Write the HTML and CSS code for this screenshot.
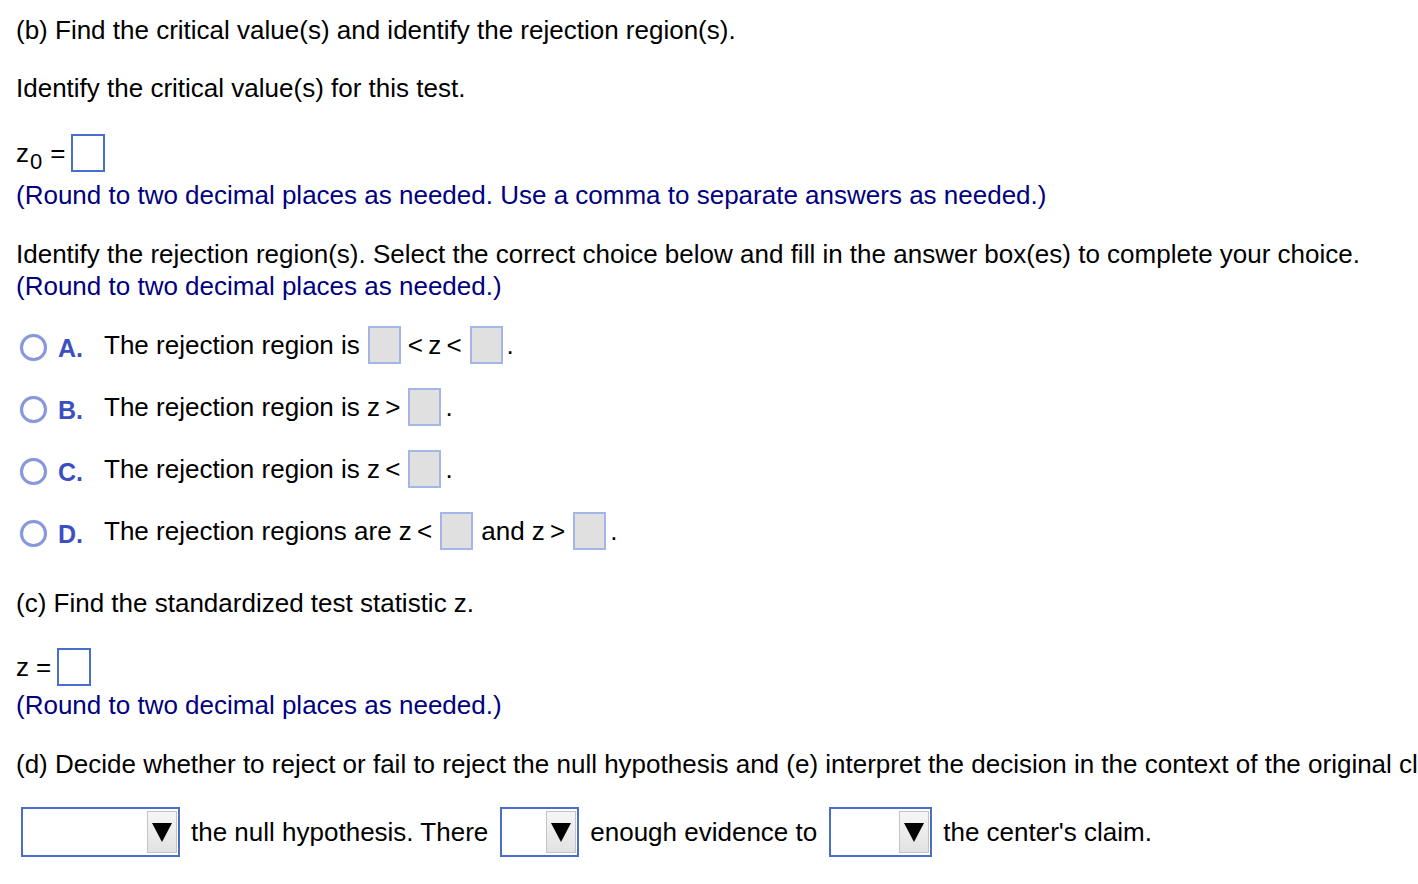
FILE: index.html
```html
<!DOCTYPE html>
<html>
<head>
<meta charset="utf-8">
<link rel="stylesheet" href="styles.css">
</head>
<body>
<div class="page">
  <p class="line l1">(b) Find the critical value(s) and identify the rejection region(s).</p>
  <p class="line l2">Identify the critical value(s) for this test.</p>
  <div class="row zrow">
    <span class="var">z<sub>0</sub></span><span class="eq">=</span><span class="ans"></span>
  </div>
  <p class="line note n1">(Round to two decimal places as needed. Use a comma to separate answers as needed.)</p>
  <p class="line l3">Identify the rejection region(s). Select the correct choice below and fill in the answer box(es) to complete your choice.</p>
  <p class="line note n2">(Round to two decimal places as needed.)</p>
  <div class="choices">
    <div class="choice">
      <span class="radio"></span><span class="letter">A.</span>
      <span class="txt">The rejection region is</span><span class="box"></span><span class="txt op">&lt;&thinsp;z&thinsp;&lt;</span><span class="box"></span><span class="txt dot">.</span>
    </div>
    <div class="choice">
      <span class="radio"></span><span class="letter">B.</span>
      <span class="txt">The rejection region is z&thinsp;&gt;</span><span class="box"></span><span class="txt dot">.</span>
    </div>
    <div class="choice">
      <span class="radio"></span><span class="letter">C.</span>
      <span class="txt">The rejection region is z&thinsp;&lt;</span><span class="box"></span><span class="txt dot">.</span>
    </div>
    <div class="choice">
      <span class="radio"></span><span class="letter">D.</span>
      <span class="txt">The rejection regions are z&thinsp;&lt;</span><span class="box"></span><span class="txt mid">and z&thinsp;&gt;</span><span class="box"></span><span class="txt dot">.</span>
    </div>
  </div>
  <p class="line l4">(c) Find the standardized test statistic z.</p>
  <div class="row zrow2">
    <span class="var">z</span><span class="eq eq2">=</span><span class="ans"></span>
  </div>
  <p class="line note n3">(Round to two decimal places as needed.)</p>
  <p class="line l5">(d) Decide whether to reject or fail to reject the null hypothesis and (e) interpret the decision in the context of the original claim.</p>
  <div class="row selrow">
    <span class="sel s1"><span class="btn"><svg width="22" height="22" viewBox="0 0 22 22"><path d="M1 2 H21 L11 21 Z" fill="#000"/></svg></span></span>
    <span class="txt">the null hypothesis. There</span>
    <span class="sel s2"><span class="btn"><svg width="22" height="22" viewBox="0 0 22 22"><path d="M1 2 H21 L11 21 Z" fill="#000"/></svg></span></span>
    <span class="txt">enough evidence to</span>
    <span class="sel s3"><span class="btn"><svg width="22" height="22" viewBox="0 0 22 22"><path d="M1 2 H21 L11 21 Z" fill="#000"/></svg></span></span>
    <span class="txt">the center's claim.</span>
  </div>
</div>
</body>
</html>
```
FILE: styles.css
```css
html, body {
  margin: 0;
  padding: 0;
  background: #fff;
  overflow: hidden;
}
body {
  width: 1418px;
  height: 884px;
  font-family: "Liberation Sans", Arial, sans-serif;
  font-size: 26px;
  color: #000;
}
.page {
  padding: 15px 0 0 16px;
  display: flex;
  flex-direction: column;
  white-space: nowrap;
}
.line {
  margin: 0;
  height: 30px;
  line-height: 30px;
}
.note { color: #000080; }
.l2 { margin-top: 28px; }
.row {
  display: flex;
  align-items: center;
}
.zrow { margin-top: 31px; height: 38px; }
.var sub {
  font-size: 22px;
  vertical-align: -7px;
  line-height: 0;
  margin-left: 1px;
}
.eq { margin-left: 8px; margin-right: 6px; }
.eq2 { margin-left: 7px; margin-right: 6px; }
.ans {
  display: inline-block;
  width: 30px;
  height: 34px;
  border: 2px solid #4a6fcb;
  background: #fff;
}
.n1 { margin-top: 8px; }
.l3 { margin-top: 28px; height: 32px; line-height: 32px; }
.n2 { height: 32px; line-height: 32px; }
.choices {
  margin-top: 24px;
  display: flex;
  flex-direction: column;
  gap: 24px;
}
.choice {
  display: flex;
  align-items: center;
  height: 38px;
}
.radio {
  display: inline-block;
  box-sizing: border-box;
  width: 27px;
  height: 27px;
  border-radius: 50%;
  border: 3px solid #8797db;
  box-shadow: 0 0 1px #aab4e8;
  margin-left: 4px;
  margin-top: 5px;
}
.letter {
  color: #3b4fc2;
  font-weight: bold;
  font-size: 25px;
  display: inline-block;
  width: 46px;
  margin-left: 11px;
  margin-top: 6px;
}
.txt { display: inline-block; }
.box {
  display: inline-block;
  width: 29px;
  height: 34px;
  border: 2px solid #a4b6e6;
  background: #e0e0e0;
  margin-left: 8px;
}
.op { margin-left: 7px; }
.dot { margin-left: 4px; }
.mid { margin-left: 8px; }
.l4 { margin-top: 38px; }
.zrow2 { margin-top: 30px; height: 38px; }
.n3 { margin-top: 4px; }
.l5 { margin-top: 29px; }
.selrow { margin-top: 28px; height: 50px; }
.sel {
  box-sizing: border-box;
  display: inline-flex;
  justify-content: flex-end;
  align-items: center;
  height: 50px;
  border: 2px solid #4a6fcb;
  background: #fff;
  padding-right: 1px;
}
.s1 { width: 159px; margin-left: 5px; }
.s2 { width: 79px; margin-left: 12px; }
.s3 { width: 103px; margin-left: 12px; }
.selrow .txt { margin-left: 11px; }
.btn {
  box-sizing: border-box;
  display: flex;
  align-items: center;
  justify-content: center;
  width: 30px;
  height: 42px;
  border: 1px solid #c4c4c4;
  background: linear-gradient(#f6f6f6, #e2e2e2);
}
```
